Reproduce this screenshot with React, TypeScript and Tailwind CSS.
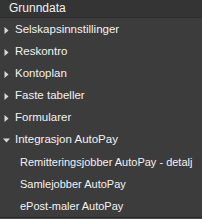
const items = [
  { label: 'Selskapsinnstillinger', open: false },
  { label: 'Reskontro', open: false },
  { label: 'Kontoplan', open: false },
  { label: 'Faste tabeller', open: false },
  { label: 'Formularer', open: false },
  { label: 'Integrasjon AutoPay', open: true },
]

const children = ['Remitteringsjobber AutoPay - detalj', 'Samlejobber AutoPay', 'ePost-maler AutoPay']

function Arrow({ open }: { open: boolean }) {
  return (
    <svg width="7" height="7" viewBox="0 0 7 7" className="shrink-0">
      {open ? <path d="M0 1.5h7L3.5 5.5z" fill="#d8d8d8" /> : <path d="M1.5 0v7L5.5 3.5z" fill="#d8d8d8" />}
    </svg>
  )
}

export default function App() {
  return (
    <div
      className="w-[202px] h-[219px] bg-[#3c3c3c] text-[#f2f2f2] flex flex-col overflow-hidden"
      style={{ fontFamily: '"Liberation Sans", Arial, sans-serif' }}
    >
      <div className="h-[18px] shrink-0 bg-[#343434] border-b border-[#2a2a2a] pl-[9px] text-[12px] leading-[17px]">Grunndata</div>
      <div className="flex-1 flex flex-col pt-[1px]">
        {items.map((it) => (
          <div key={it.label} className="h-[22px] flex items-center gap-[5px] pl-[3px] text-[11.5px] whitespace-nowrap">
            <Arrow open={it.open} />
            <span>{it.label}</span>
          </div>
        ))}
        {children.map((c) => (
          <div key={c} className="h-[22px] flex items-center pl-[20px] text-[11px] whitespace-nowrap">
            {c}
          </div>
        ))}
      </div>
      <div className="h-[3px] shrink-0 border-t border-[#2a2a2a] bg-[#4a4a4a]" />
    </div>
  )
}
